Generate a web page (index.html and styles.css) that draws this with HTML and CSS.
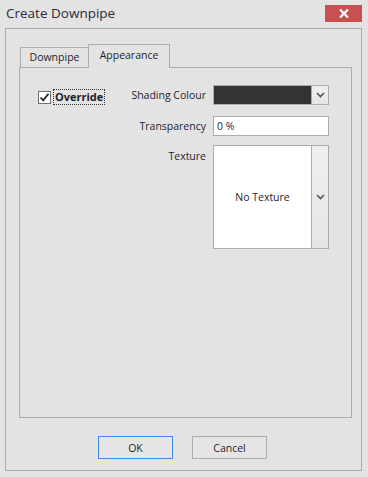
FILE: index.html
```html
<!DOCTYPE html>
<html lang="en">
<head>
    <meta charset="UTF-8">
    <title>Create Downpipe</title>
    <link rel="stylesheet" href="styles.css">
</head>
<body>
<div class="window">
    <div class="titlebar">
        <span class="title">Create Downpipe</span>
        <button class="close-btn">
            <svg width="10" height="9" viewBox="0 0 10 9">
                <path d="M1 0.5 L9 8.5 M9 0.5 L1 8.5" stroke="#fff" stroke-width="2.2"/>
            </svg>
        </button>
    </div>

    <div class="frame">
        <div class="tabs">
            <div class="tab">Downpipe</div>
            <div class="tab active">Appearance</div>
        </div>

        <div class="panel">
            <label class="override">
                <span class="checkbox">
                    <svg width="11" height="11" viewBox="0 0 11 11">
                        <path d="M1.5 5.5 L4.2 8.3 L9.5 1.8" fill="none" stroke="#222" stroke-width="1.8"/>
                    </svg>
                </span>
                <span class="override-text">Override</span>
            </label>

            <div class="fields">
                <span class="field-label">Shading Colour</span>
                <div class="colour-select">
                    <div class="colour-swatch"></div>
                    <div class="drop-btn">
                        <svg width="9" height="6" viewBox="0 0 9 6">
                            <path d="M1 1 L4.5 4.5 L8 1" fill="none" stroke="#555" stroke-width="1.6"/>
                        </svg>
                    </div>
                </div>

                <span class="field-label">Transparency</span>
                <div class="text-input">0 %</div>

                <span class="field-label top">Texture</span>
                <div class="texture-select">
                    <div class="texture-preview">No Texture</div>
                    <div class="drop-btn">
                        <svg width="9" height="6" viewBox="0 0 9 6">
                            <path d="M1 1 L4.5 4.5 L8 1" fill="none" stroke="#555" stroke-width="1.6"/>
                        </svg>
                    </div>
                </div>
            </div>
        </div>

        <div class="buttons">
            <button class="btn default">OK</button>
            <button class="btn">Cancel</button>
        </div>
    </div>
</div>
</body>
</html>
```

FILE: styles.css
```css
* {
    box-sizing: border-box;
}

body {
    margin: 0;
    background-color: #e3e3e3;
    font-family: "Open Sans", "Noto Sans", sans-serif;
    font-size: 10.5px;
    color: #1e1e2e;
}

.window {
    width: 368px;
    height: 477px;
}

.titlebar {
    height: 28px;
    display: flex;
    align-items: flex-start;
    justify-content: space-between;
}

.title {
    font-size: 13.5px;
    color: #2b2b3a;
    padding: 4px 0 0 6px;
}

.close-btn {
    width: 37px;
    height: 17px;
    margin: 5px 6px 0 0;
    border: none;
    padding: 0;
    background-color: #c75050;
    display: flex;
    align-items: center;
    justify-content: center;
}

.frame {
    margin: 0 6px 0 5px;
    height: 443px;
    border: 1px solid #ababab;
    padding: 15px 9px 0 13px;
    display: flex;
    flex-direction: column;
}

.tabs {
    display: flex;
    align-items: flex-end;
    height: 23px;
    padding-left: 1px;
}

.tab {
    height: 20px;
    border: 1px solid #acacac;
    border-bottom: none;
    line-height: 19px;
    width: 69px;
    text-align: center;
}

.tab.active {
    height: 24px;
    width: 82px;
    margin-left: -1px;
    margin-bottom: -1px;
    background-color: #e3e3e3;
    position: relative;
    z-index: 1;
    line-height: 21px;
}

.panel {
    height: 351px;
    border: 1px solid #acacac;
    display: flex;
    padding: 17px 22px 0 18px;
}

.override {
    display: flex;
    align-items: center;
    height: 18px;
    margin-top: 3px;
}

.checkbox {
    width: 13px;
    height: 13px;
    border: 1px solid #6f6f6f;
    background-color: #fff;
    display: flex;
}

.override-text {
    font-weight: bold;
    font-size: 11px;
    margin-left: 2px;
    padding: 0 1px;
    border: 1px dotted #333;
    line-height: 14px;
}

.fields {
    margin-left: auto;
    display: grid;
    grid-template-columns: auto 116px;
    column-gap: 7px;
    row-gap: 11px;
    align-items: center;
    align-content: start;
}

.field-label {
    text-align: right;
}

.field-label.top {
    align-self: start;
    padding-top: 2px;
}

.colour-select,
.texture-select {
    display: flex;
    border: 1px solid #acacac;
}

.colour-select {
    height: 20px;
}

.colour-swatch {
    flex: 1;
    background-color: #333333;
}

.drop-btn {
    width: 17px;
    border-left: 1px solid #acacac;
    background: linear-gradient(#f0f0f0, #e5e5e5);
    display: flex;
    align-items: center;
    justify-content: center;
}

.text-input {
    height: 20px;
    border: 1px solid #acacac;
    background-color: #fff;
    padding-left: 3px;
    line-height: 18px;
}

.texture-select {
    height: 104px;
    margin-top: -2px;
}

.texture-preview {
    flex: 1;
    background-color: #fff;
    display: flex;
    align-items: center;
    justify-content: center;
}

.buttons {
    display: flex;
    justify-content: center;
    gap: 19px;
    margin-top: 18px;
    padding-right: 6px;
}

.btn {
    width: 75px;
    height: 23px;
    border: 1px solid #adadad;
    background-color: #e5e5e5;
    font-family: inherit;
    font-size: 10.5px;
    color: #1e1e2e;
    padding: 0;
}

.btn.default {
    border-color: #3d8ee2;
}
```
